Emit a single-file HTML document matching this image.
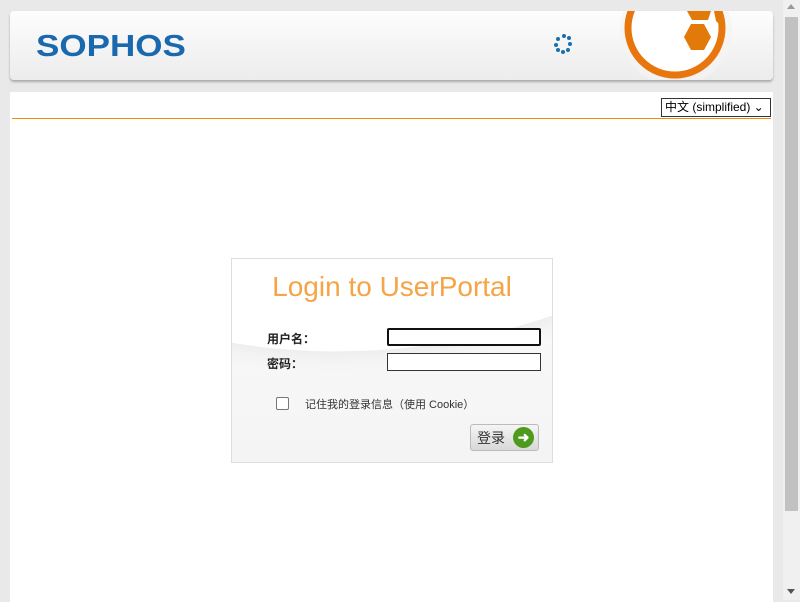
<!DOCTYPE html>
<html><head><meta charset="utf-8"><style>
body{margin:0;width:800px;height:600px;background:#e9e9e9;overflow:hidden;position:relative;font-family:"Liberation Sans","Noto Sans CJK SC",sans-serif}
.hdr{position:absolute;left:10px;top:11px;width:763px;height:69px;border-radius:4px;background:linear-gradient(#fdfdfd,#ececec);box-shadow:0 2px 2px #aaa;overflow:hidden}
.logo{position:absolute;left:26px;top:17px;font-size:31px;font-weight:bold;color:#1a68ae;transform:scaleX(1.13);transform-origin:left}
.main{position:absolute;left:10px;top:92px;width:763px;height:510px;background:#fff}
.sb{position:absolute;left:783px;top:0;width:17px;height:600px;background:#f0f0f0}
.thumb{position:absolute;left:2px;top:17px;width:13px;height:494px;background:#c1c1c1}
.line{position:absolute;left:2px;top:26px;width:759px;height:1px;background:#f08a0a}
.sel{position:absolute;left:651px;top:6px;border:1px solid #333;font-size:12px;line-height:17px;padding-left:3px;box-sizing:border-box;width:110px;height:19px}
.box{position:absolute;left:231px;top:258px;width:320px;height:203px;border:1px solid #ddd;background:linear-gradient(#fafafa,#f4f4f4);overflow:hidden}
.sw{position:absolute;left:-250px;top:-380px;width:800px;height:470px;border-radius:50%;background:#fff;box-shadow:0 6px 18px #ebebeb;transform:rotate(-6deg)}
.t{position:absolute;left:0;width:320px;top:12px;text-align:center;font-size:28px;color:#f5a446;font-weight:300}
.lb{position:absolute;left:35px;font-size:12px;font-weight:bold;color:#222}
.in{position:absolute;left:155px;width:154px;height:18px;box-sizing:border-box;border:1px solid #333;background:#fff}
</style></head><body>
<div class="hdr"><div class="logo">SOPHOS</div>
<svg style="position:absolute;left:530px;top:0" width="233" height="69">
<g fill="#1a6fb0"><circle cx="24" cy="25" r="2"/><circle cx="29" cy="27" r="2"/><circle cx="30" cy="33" r="2"/><circle cx="28" cy="39" r="2"/><circle cx="23" cy="41" r="2"/><circle cx="18" cy="39" r="2"/><circle cx="16" cy="34" r="2"/><circle cx="18" cy="28" r="2"/></g>
<circle cx="136" cy="19" r="56" fill="#f3f3f3" opacity=".7"/>
<circle cx="135" cy="17" r="47" fill="#fff" stroke="#e8760c" stroke-width="7"/>
<polygon points="144,26 151,13 164,13 171,26 164,39 151,39" fill="#e27a0a"/>
<polygon points="147,0 171,0 168,9 152,9" fill="#e27a0a"/>
<polygon points="174,0 182,0 184,18 176,10" fill="#e27a0a"/>
</svg></div>
<div class="main"><div class="sel">中文 (simplified) ⌄</div><div class="line"></div></div>
<div class="box"><div class="sw"></div>
<div class="t">Login to UserPortal</div>
<div class="lb" style="top:71px">用户名：</div>
<div class="lb" style="top:96px">密码：</div>
<div class="in" style="top:69px;border:2px solid #111;border-radius:2px"></div>
<div class="in" style="top:94px"></div>
<div style="position:absolute;left:44px;top:138px;width:11px;height:11px;border:1px solid #777;border-radius:2px;background:#fff"></div>
<div style="position:absolute;left:73px;top:137px;font-size:11px;color:#333">记住我的登录信息（使用 Cookie）</div>
<div style="position:absolute;left:238px;top:165px;width:67px;height:25px;border:1px solid #bbb;border-radius:3px;background:linear-gradient(#f5f5f5,#d8d8d8)">
<span style="position:absolute;left:6px;top:3px;font-size:14px;color:#333">登录</span>
<div style="position:absolute;left:42px;top:2px;width:21px;height:21px;border-radius:50%;background:#4e9a1c;color:#fff;font-size:14px;line-height:21px;text-align:center;font-weight:bold">➜</div></div>
</div>
<div class="sb"><div class="thumb"></div><div style="position:absolute;left:4px;top:4px;border:4px solid transparent;border-bottom:5px solid #999;border-top:0"></div><div style="position:absolute;left:4px;top:589px;border:4px solid transparent;border-top:5px solid #555;border-bottom:0"></div></div>
</body></html>
